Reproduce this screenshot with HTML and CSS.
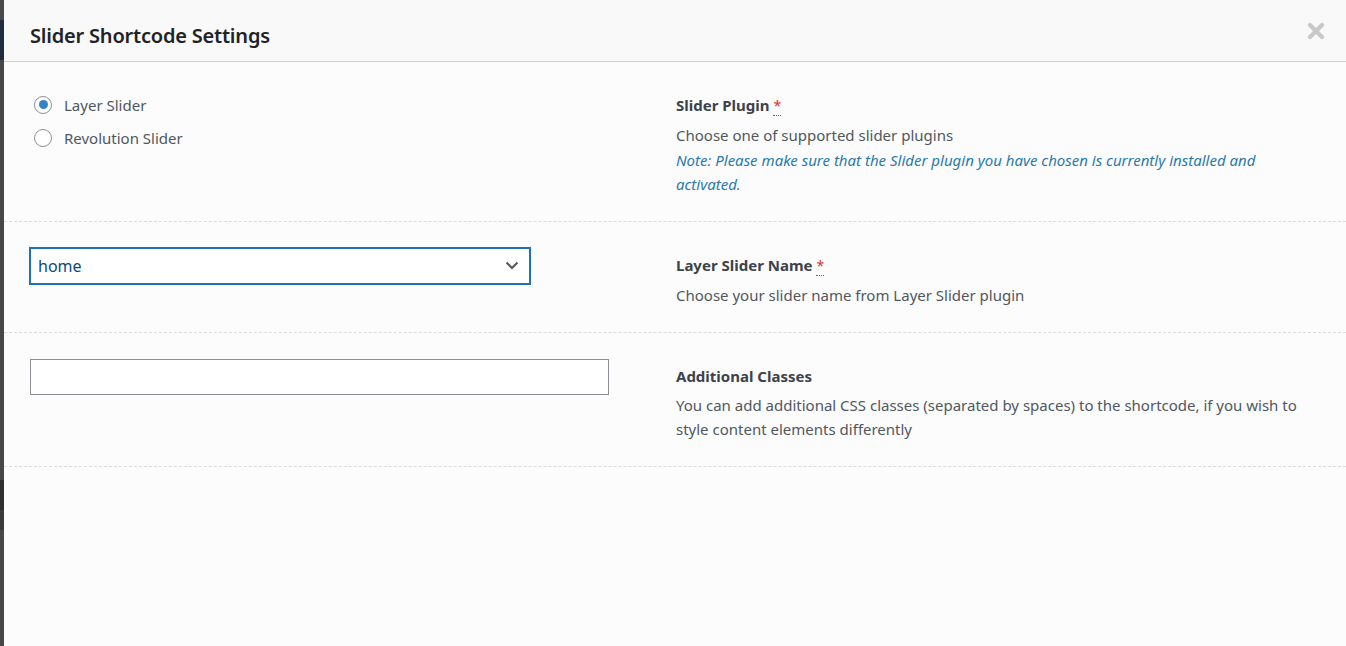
FILE: index.html
```html
<!DOCTYPE html>
<html>
<head>
<meta charset="utf-8">
<link rel="stylesheet" href="styles.css">
</head>
<body>
<div class="page">
  <div class="backdrop">
    <div class="bd bd1"></div>
    <div class="bd bd2"></div>
    <div class="bd bd3"></div>
    <div class="bd bd4"></div>
    <div class="bd bd5"></div>
    <div class="bd bd6"></div>
  </div>
  <div class="modal">
    <div class="modal-header">
      <h1 class="modal-title">Slider Shortcode Settings</h1>
      <button class="close" aria-label="Close">
        <svg width="20" height="20" viewBox="0 0 20 20"><path d="M4 4 L16 16 M16 4 L4 16" stroke="#c9c9c9" stroke-width="4.4" stroke-linecap="round"/></svg>
      </button>
    </div>
    <div class="modal-body">
      <div class="row">
        <div class="field">
          <label class="radio"><span class="radio-circle checked"></span>Layer Slider</label>
          <label class="radio"><span class="radio-circle"></span>Revolution Slider</label>
        </div>
        <div class="info">
          <div class="label">Slider Plugin <abbr class="req">*</abbr></div>
          <div class="desc">Choose one of supported slider plugins</div>
          <div class="note">Note: Please make sure that the Slider plugin you have chosen is currently installed and activated.</div>
        </div>
      </div>
      <div class="row">
        <div class="field">
          <div class="select">
            <span class="select-value">home</span>
            <svg class="chevron" width="14" height="9" viewBox="0 0 14 9"><path d="M1.5 1.5 L7 7 L12.5 1.5" fill="none" stroke="#50575e" stroke-width="2"/></svg>
          </div>
        </div>
        <div class="info">
          <div class="label">Layer Slider Name <abbr class="req">*</abbr></div>
          <div class="desc">Choose your slider name from Layer Slider plugin</div>
        </div>
      </div>
      <div class="row">
        <div class="field">
          <div class="text-input"></div>
        </div>
        <div class="info">
          <div class="label">Additional Classes</div>
          <div class="desc">You can add additional CSS classes (separated by spaces) to the shortcode, if you wish to style content elements differently</div>
        </div>
      </div>
    </div>
  </div>
</div>
</body>
</html>
```
FILE: styles.css
```css
* { box-sizing: border-box; }
html, body { margin: 0; padding: 0; }
body {
  width: 1346px;
  height: 646px;
  overflow: hidden;
  font-family: "Noto Sans", "Open Sans", sans-serif;
  background: #fcfcfc;
}
.page {
  display: flex;
  height: 646px;
}
.backdrop {
  width: 4px;
  flex: none;
  display: flex;
  flex-direction: column;
  background: #464646;
}
.bd { flex: none; }
.bd1 { height: 20px; background: #4a4a4a; }
.bd2 { height: 40px; background: #1f2d3d; }
.bd3 { height: 420px; background: #474747; }
.bd4 { height: 30px; background: #2f2f2f; }
.bd5 { height: 20px; background: #3a3a3a; }
.bd6 { flex: 1; background: #474747; }

.modal {
  flex: 1;
  background: #fcfcfc;
  display: flex;
  flex-direction: column;
}
.modal-header {
  height: 62px;
  background: #f9f9f9;
  border-bottom: 1px solid #cfcfcf;
  display: flex;
  align-items: center;
  justify-content: space-between;
  padding: 0 20px 0 26px;
}
.modal-title {
  margin: 0;
  font-size: 20px;
  font-weight: 600;
  color: #1d2327;
  letter-spacing: -0.2px;
  padding-top: 9px;
}
.close {
  border: 0;
  background: transparent;
  padding: 0;
  width: 20px;
  height: 20px;
  margin-top: 0px;
}
.close svg { display: block; }

.row {
  display: grid;
  grid-template-columns: 1fr 1fr;
  padding: 0 26px;
  border-bottom: 1px dashed #dcdcdc;
}
.field { padding-top: 26px; }
.info {
  padding: 30px 0 24.3px 1px;
}
.label {
  font-size: 15px;
  font-weight: 700;
  color: #3c434a;
  line-height: 26px;
  margin-bottom: 4px;
}
.req {
  color: #d63638;
  text-decoration: none;
  border-bottom: 1px dotted #d63638;
  font-weight: 400;
  font-size: 14px;
}
.desc, .note {
  font-size: 15px;
  line-height: 24.5px;
  color: #50575e;
}
.note {
  font-style: italic;
  color: #2a7aa8;
}

.radio {
  display: flex;
  align-items: center;
  font-size: 15px;
  color: #50575e;
  height: 33px;
  padding-left: 4px;
}
.radio:first-child { margin-top: 0px; }
.radio-circle {
  width: 18px;
  height: 18px;
  border-radius: 50%;
  border: 1px solid #8c8f94;
  background: #fff;
  margin-right: 12px;
  display: flex;
  align-items: center;
  justify-content: center;
}
.radio-circle.checked::after {
  content: "";
  width: 9px;
  height: 9px;
  border-radius: 50%;
  background: #3582c4;
}

.select {
  width: 500px;
  height: 36px;
  border: 1px solid #2271b1;
  box-shadow: 0 0 0 1px #2271b1;
  background: #fff;
  display: flex;
  align-items: center;
  justify-content: space-between;
  padding: 0 10px 0 7px;
}
.select-value {
  font-size: 16px;
  color: #0a4b78;
}
.text-input {
  width: 579px;
  height: 36px;
  border: 1px solid #8c8f94;
  background: #fff;
}
```
